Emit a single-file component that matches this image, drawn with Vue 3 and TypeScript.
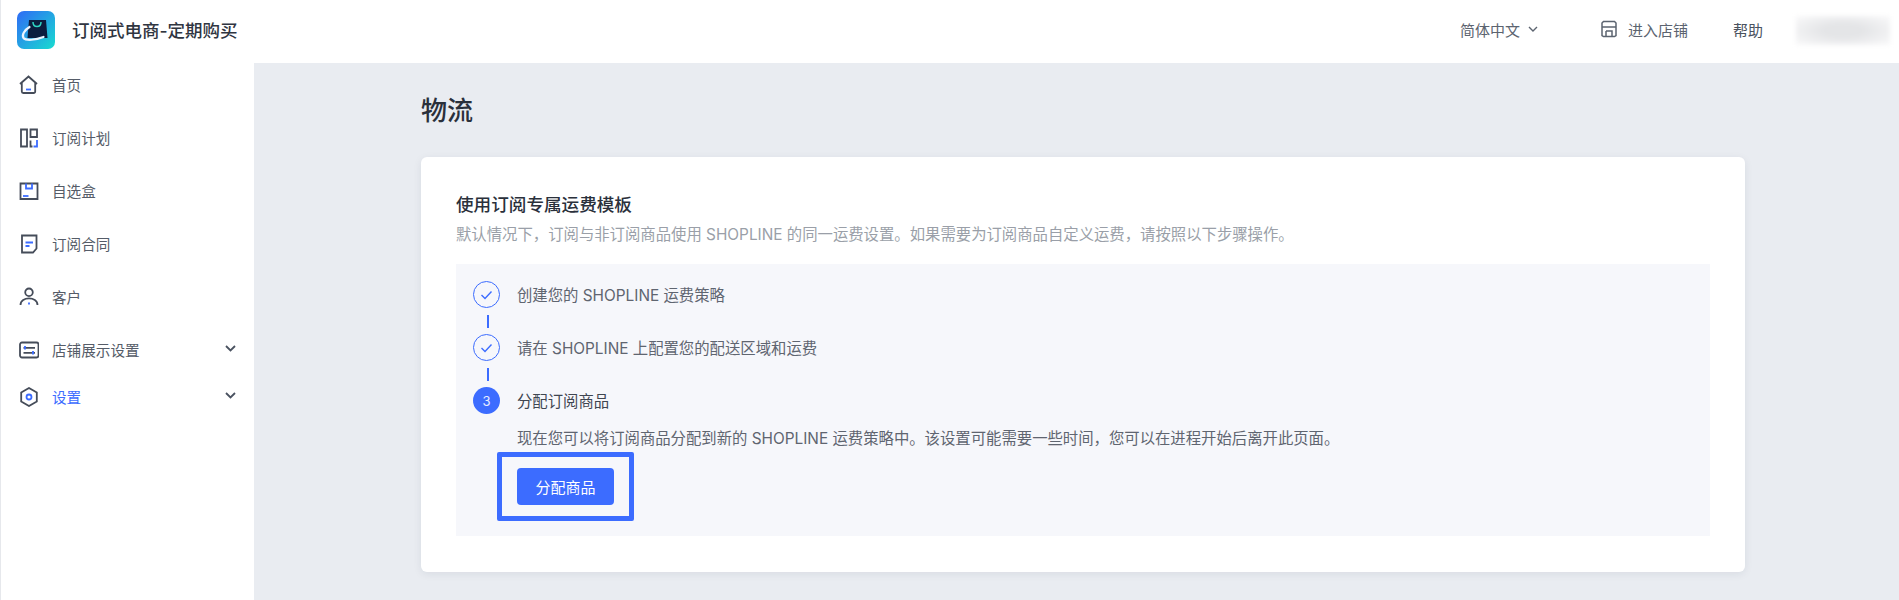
<template>
  <div class="app">
    <header class="topbar">
      <div class="brand">
        <svg class="logo" width="38" height="38" viewBox="0 0 38 38">
          <defs>
            <linearGradient id="logoBg" x1="0" y1="0" x2="1" y2="1">
              <stop offset="0" stop-color="#2f6bf6" />
              <stop offset="1" stop-color="#18dcd0" />
            </linearGradient>
          </defs>
          <rect width="38" height="38" rx="7" fill="url(#logoBg)" />
          <path d="M12 9h17l1.500 18H10.500z" fill="#0b1d3f" />
          <path d="M16 11c0 6 8 6 8 0" fill="none" stroke="#2fd6c4" stroke-width="1.500" />
          <path d="M12.500 16c-5 3-8 8-6 11 2.500 3 12 2 20-1" fill="none" stroke="#eaf4ff" stroke-width="2.200" stroke-linecap="round" />
        </svg>
        <span class="brand-name">订阅式电商-定期购买</span>
      </div>
      <div class="top-actions">
        <span class="lang">简体中文
          <svg width="10" height="6" viewBox="0 0 10 6" fill="none"><path d="M1 1l4 4 4-4" stroke="#5c6470" stroke-width="1.400" /></svg>
        </span>
        <span class="store">
          <svg width="18" height="18" viewBox="0 0 18 18" fill="none" stroke="#5c6470" stroke-width="1.500">
            <path d="M3.500 1.500h11l1.500 1.500v12.500l-1.500 1h-11l-1.500-1V3zM2 7h14" />
            <path d="M6 11h6v5.500M6 16.500V11" />
          </svg>
          进入店铺
        </span>
        <span class="help">帮助</span>
        <div class="account"></div>
      </div>
    </header>

    <div class="body">
      <nav class="sidebar">
        <a v-for="item in navItems" :key="item.label" class="nav-item" :class="{ active: item.active, tight: item.tight }">
          <svg class="nav-icon" width="20" height="20" viewBox="0 0 20 20" fill="none" stroke="#454c59" stroke-width="1.800">
            <path v-for="d in item.paths" :key="d" :d="d" />
            <path v-for="d in item.accents" :key="d" :d="d" stroke="#3c6cff" />
          </svg>
          <span class="nav-label">{{ item.label }}</span>
          <svg v-if="item.arrow" class="nav-arrow" width="11" height="7" viewBox="0 0 11 7" fill="none">
            <path d="M1 1l4.500 4.500L10 1" stroke="#4a5260" stroke-width="1.800" />
          </svg>
        </a>
      </nav>

      <main class="content">
        <h1 class="page-title">物流</h1>
        <section class="card">
          <h2 class="card-title">使用订阅专属运费模板</h2>
          <p class="card-desc">默认情况下，订阅与非订阅商品使用 SHOPLINE 的同一运费设置。如果需要为订阅商品自定义运费，请按照以下步骤操作。</p>
          <div class="panel">
            <div v-for="step in steps" :key="step" class="step">
              <div class="step-row">
                <span class="step-dot">
                  <svg width="13" height="10" viewBox="0 0 13 10" fill="none"><path d="M1.500 5l3.500 3.500 6.500-7" stroke="#3c6cff" stroke-width="1.400" /></svg>
                </span>
                <span class="step-text">{{ step }}</span>
              </div>
              <div class="step-line"></div>
            </div>
            <div class="step-row current">
              <span class="step-dot solid">3</span>
              <span class="step-text">分配订阅商品</span>
            </div>
            <div class="step-body">
              <p class="step-desc">现在您可以将订阅商品分配到新的 SHOPLINE 运费策略中。该设置可能需要一些时间，您可以在进程开始后离开此页面。</p>
              <div class="highlight">
                <button class="primary">分配商品</button>
              </div>
            </div>
          </div>
        </section>
      </main>
    </div>
  </div>
</template>

<script setup lang="ts">
interface NavItem {
  label: string
  paths: string[]
  accents: string[]
  arrow?: boolean
  active?: boolean
  tight?: boolean
}

const navItems: NavItem[] = [
  { label: '首页', paths: ['M1 9L9.500 1.500 18 9M2.800 7.500v9a1.500 1.500 0 0 0 1.500 1.500h10.400a1.500 1.500 0 0 0 1.500-1.500v-9'], accents: ['M7 14.500h5'] },
  { label: '订阅计划', paths: ['M2 1.500h6v17H2zM11.500 1.500h6.500v7.500h-6.500zM11.500 12.500v6h2'], accents: ['M18 12v6.500h-3.500'] },
  { label: '自选盒', paths: ['M1.500 2.500h17v15.500h-17z'], accents: ['M4 15h5.500', 'M7 2.500v5h6v-5'] },
  { label: '订阅合同', paths: ['M3 1.500h14.500v13l-3.500 4H3z'], accents: ['M6.500 8.500h7.500M6.500 12h4'] },
  { label: '客户', paths: ['M10 1.500a3.800 3.800 0 1 0 0 7.600a3.800 3.800 0 1 0 0-7.600zM1.500 18c0-8.800 17-8.800 17 0'], accents: ['M10 15.500v2'] },
  { label: '店铺展示设置', paths: ['M3 2.500h14.500a2 2 0 0 1 2 2v11a2 2 0 0 1-2 2H3a2 2 0 0 1-2-2v-11a2 2 0 0 1 2-2zM4.500 7.800h11.500M4.500 12.800h11.500'], accents: ['M6 6v3.500M14 11v3.500'], arrow: true },
  { label: '设置', paths: ['M10 1l7.800 4.500v9L10 19l-7.800-4.500v-9z'], accents: ['M10 7.500a2.500 2.500 0 1 0 0 5a2.500 2.500 0 1 0 0-5z'], arrow: true, active: true, tight: true },
]

const steps = ['创建您的 SHOPLINE 运费策略', '请在 SHOPLINE 上配置您的配送区域和运费']
</script>

<style>
html,
body {
  margin: 0;
  background: #e9ecf1;
}
</style>

<style scoped>
.app {
  height: 600px;
  overflow: hidden;
  display: flex;
  flex-direction: column;
  font-family: Inter, 'Noto Sans CJK SC', sans-serif;
  color: #2a303b;
  background: #e9ecf1;
}

/* top bar */
.topbar {
  height: 63px;
  flex-shrink: 0;
  display: flex;
  align-items: center;
  justify-content: space-between;
  background: #fff;
  border-left: 1px solid #e6e8ec;
  padding: 0 9px 3px 16px;
  box-sizing: border-box;
}
.brand {
  display: flex;
  align-items: center;
  gap: 17px;
}
.logo {
  display: block;
}
.brand-name {
  font-size: 17.500px;
  font-weight: 500;
  color: #2f3541;
  padding-bottom: 1px;
}
.top-actions {
  display: flex;
  align-items: center;
  font-size: 15px;
  color: #5c6470;
}
.lang {
  display: flex;
  align-items: center;
  gap: 8px;
  margin-right: 62px;
  padding-bottom: 2px;
}
.store {
  display: flex;
  align-items: center;
  gap: 10px;
  margin-right: 45px;
  padding-bottom: 2px;
}
.help {
  margin-right: 33px;
  padding-bottom: 2px;
  color: #4a5260;
}
.account {
  width: 94px;
  height: 29px;
  background: radial-gradient(ellipse at center, #e4e5e7 30%, #f7f7f8 90%);
  filter: blur(2px);
}

.body {
  flex: 1;
  display: flex;
  min-height: 0;
}

/* sidebar */
.sidebar {
  width: 254px;
  flex-shrink: 0;
  box-sizing: border-box;
  display: flex;
  flex-direction: column;
  gap: 9px;
  background: #fff;
  border-left: 1px solid #e6e8ec;
}
.nav-item {
  height: 44px;
  display: flex;
  align-items: center;
  padding: 0 18px;
  font-size: 14.600px;
  color: #555c68;
}
.nav-item.tight {
  margin-top: -6px;
}
.nav-item.active .nav-label {
  color: #3c6cff;
}
.nav-icon {
  flex-shrink: 0;
  margin-right: 13px;
}
.nav-label {
  flex: 1;
  padding-bottom: 2px;
}
.nav-arrow {
  margin-bottom: 3px;
}

/* content */
.content {
  flex: 1;
  min-width: 0;
  padding: 0 154px 0 167px;
}
.page-title {
  margin: 0;
  padding-top: 30px;
  height: 94px;
  box-sizing: border-box;
  font-size: 26px;
  line-height: 36px;
  font-weight: 500;
  color: #2a303b;
}
.card {
  height: 415px;
  box-sizing: border-box;
  padding: 36px 35px 0;
  background: #fff;
  border-radius: 6px;
  box-shadow: 0 2px 8px rgba(30, 40, 60, 0.08);
}
.card-title {
  margin: 0;
  font-size: 17.600px;
  line-height: 24px;
  font-weight: 500;
  color: #2a303b;
}
.card-desc {
  margin: 7px 0 0;
  font-size: 15.370px;
  line-height: 22px;
  color: #9a9fa8;
}
.panel {
  margin-top: 18px;
  height: 272px;
  box-sizing: border-box;
  padding: 17px 17px 0;
  background: #f6f7fb;
}
.step-row {
  display: flex;
  align-items: center;
  height: 27px;
}
.step-dot {
  width: 27px;
  height: 27px;
  box-sizing: border-box;
  flex-shrink: 0;
  border: 1.200px solid #3c6cff;
  border-radius: 50%;
  display: flex;
  align-items: center;
  justify-content: center;
  margin-right: 17px;
}
.step-dot.solid {
  background: #3c6cff;
  color: #e8eeff;
  font-size: 13px;
  border: 0;
}
.step-text {
  font-size: 15.370px;
  padding-bottom: 2px;
  color: #5f6570;
}
.current .step-text {
  color: #3f4651;
}
.step-line {
  width: 1.500px;
  height: 13px;
  margin: 7px 0 6px 14px;
  background: #3c6cff;
}
.step-body {
  padding-left: 44px;
}
.step-desc {
  margin: 14px 0 0;
  font-size: 15.370px;
  line-height: 22px;
  color: #5f6570;
}
.highlight {
  display: inline-block;
  margin: 2px 0 0 -20px;
  padding: 11px 15px;
  border: 5px solid #3c6cff;
  border-radius: 2px;
}
.primary {
  display: block;
  width: 97px;
  height: 37px;
  padding: 0;
  border: 0;
  border-radius: 4px;
  background: #3c6cff;
  color: #fff;
  font: inherit;
  font-size: 15px;
}
</style>
